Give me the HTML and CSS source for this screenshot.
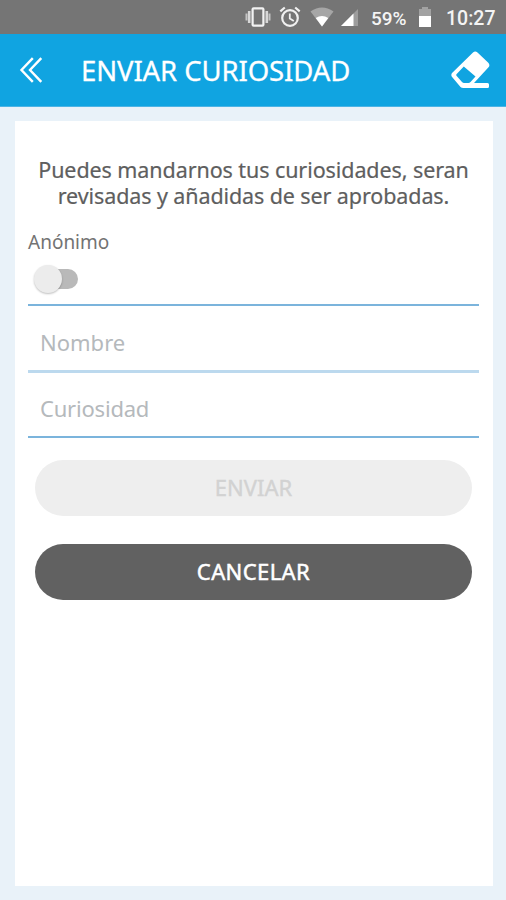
FILE: index.html
```
<!DOCTYPE html>
<html lang="es">
<head>
    <meta charset="UTF-8">
    <meta name="viewport" content="width=device-width, initial-scale=1.0">
    <title>Enviar curiosidad</title>
    <link rel="stylesheet" href="styles.css">
</head>
<body>
    <div class="status-bar">
        <svg class="vibrate" width="26" height="20" viewBox="0 0 26 20">
            <path d="M1.500 6.500v7M24.500 6.500v7" stroke="#c4c4c4" stroke-width="2"/>
            <path d="M4.200 4v12M21.800 4v12" stroke="#d8d8d8" stroke-width="2.600"/>
            <rect x="7.600" y="1.300" width="10.800" height="17.400" rx="1" fill="none" stroke="#f2f2f2" stroke-width="2.200"/>
        </svg>
        <svg class="alarm" width="22" height="22" viewBox="0 0 22 22" fill="none" stroke="#f0f0f0" stroke-width="2.200">
            <circle cx="11" cy="12" r="7.800"/>
            <path d="M1.300 5.300l4.500-3.800M20.700 5.300l-4.500-3.800"/>
            <path d="M10.800 7.500v5l4 2.500" stroke-width="1.800"/>
        </svg>
        <svg class="wifi" width="24" height="20" viewBox="0 0 24 20">
            <path d="M0.500 4.500Q12-3.500 23.500 4.500L12 19.500z" fill="#a6a6a6"/>
            <path d="M5.700 11Q12 7 18.300 11L12 19.500z" fill="#fff"/>
        </svg>
        <svg class="signal" width="19" height="19" viewBox="0 0 19 19">
            <path d="M18 1v17H1z" fill="#9c9c9c"/>
            <path d="M13.500 5.500V18H1z" fill="#fff"/>
        </svg>
        <span class="percent">59%</span>
        <svg class="battery" width="14" height="21" viewBox="0 0 14 21">
            <path d="M4 0h6v2h3v7H1V2h3z" fill="#a2a2a2"/>
            <path d="M1 9h12v11H1z" fill="#fff"/>
        </svg>
        <span class="clock">10:27</span>
    </div>

    <header class="toolbar">
        <svg class="back" width="24" height="28" viewBox="0 0 24 28" fill="none" stroke="#fff" stroke-width="2.400">
            <path d="M13.800 2.200L2.500 14l11.300 11.800M22.300 2.200L11 14l11.300 11.800"/>
        </svg>
        <h1>ENVIAR CURIOSIDAD</h1>
        <svg class="eraser" width="40" height="40" viewBox="0 0 40 40">
            <path fill="#fff" fill-rule="evenodd" d="M23 2.500q2.200-2 4.500 0l10.800 10.300q2.200 2.400 0 4.700L24 33h13.500q1.500 0 1.500 1.500v2q0 1.500-1.500 1.500H13.500q-2 0-3-1L2.300 27.300q-2-2.300 0-4.500zM13.800 16.500L6.700 24q-1 1 0 2l5.300 6q1 1 2 1h4.500q1 0 2-1l5-5.500z"/>
        </svg>
    </header>

    <main class="card">
        <div class="intro">
            <p class="line-one">Puedes mandarnos tus curiosidades, seran</p>
            <p class="line-two">revisadas y añadidas de ser aprobadas.</p>
        </div>

        <div class="anonymous">
            <span class="label">Anónimo</span>
            <div class="switch"><div class="thumb"></div></div>
        </div>

        <div class="field name"><span>Nombre</span></div>
        <div class="field fact"><span>Curiosidad</span></div>

        <button class="btn send" disabled>ENVIAR</button>
        <button class="btn cancel">CANCELAR</button>
    </main>
</body>
</html>
```
FILE: styles.css
```
* {
    box-sizing: border-box;
}

body {
    margin: 0;
    height: 900px;
    display: flex;
    flex-direction: column;
    overflow: hidden;
    background-color: #e9f2f9;
    font-family: "Noto Sans", "Open Sans", sans-serif;
    color: #5e5e5e;
}

.status-bar {
    height: 34px;
    flex: none;
    display: flex;
    align-items: center;
    padding-left: 245px;
    background-color: #757575;
    color: #f4f4f4;
    font-family: Roboto, sans-serif;
    font-weight: 500;
    white-space: nowrap;
}

.status-bar svg {
    flex: none;
}

.alarm {
    margin-left: 8px;
}

.wifi {
    margin-left: 9px;
}

.signal {
    margin-left: 6px;
}

.percent {
    width: 37px;
    margin: 2px 0 0 12px;
    font-size: 19px;
}

.battery {
    margin-left: 10px;
}

.clock {
    margin: 2px 0 0 14px;
    font-size: 19.5px;
}

.toolbar {
    height: 73px;
    flex: none;
    display: flex;
    align-items: center;
    padding: 0 16px 0 19px;
    background-color: #10a4e1;
    border-bottom: 1px solid #4cb4e5;
    color: #fff;
}

.toolbar h1 {
    margin: 2px 0 0 38px;
    font-size: 27.5px;
    font-weight: 400;
    line-height: 40px;
    letter-spacing: -0.1px;
    white-space: nowrap;
    -webkit-text-stroke: 0.3px;
}

.eraser {
    margin-left: auto;
}

.card {
    flex: 1;
    display: flex;
    flex-direction: column;
    margin: 14px 13px 14px 15px;
    padding: 36px 14px 0 13px;
    background-color: #fff;
}

.intro {
    height: 52px;
    text-align: center;
    font-size: 21.5px;
    line-height: 25.5px;
    white-space: nowrap;
    -webkit-text-stroke: 0.2px;
}

.intro p {
    margin: 0;
}

.line-one {
    letter-spacing: -0.08px;
}

.line-two {
    letter-spacing: -0.1px;
}

.anonymous {
    height: 97px;
    padding-top: 19px;
    border-bottom: 2px solid #7bb4dc;
}

.label {
    display: block;
    font-size: 19px;
    line-height: 28px;
    color: #737373;
}

.switch {
    width: 42px;
    height: 20px;
    margin: 13px 0 0 8px;
    display: flex;
    align-items: center;
    background-color: #b9b9b9;
    border-radius: 10px;
}

.thumb {
    width: 28px;
    height: 28px;
    flex: none;
    margin-left: -2px;
    background-color: #ececec;
    border-radius: 50%;
    box-shadow: 0 1px 2px rgba(0, 0, 0, 0.25);
}

.field {
    height: 65px;
    padding: 18px 0 0 12px;
    font-size: 22px;
    line-height: 34px;
    color: #b5b9bc;
    border-bottom: 2px solid #7bb4dc;
}

.name {
    height: 67px;
    padding-top: 19px;
    border-bottom: 3px solid #bcd9ee;
}

.fact {
    letter-spacing: -0.2px;
}

.btn {
    height: 56px;
    flex: none;
    margin: 0 7px 28px;
    padding: 0 0 2px;
    border: none;
    border-radius: 28px;
    font-family: inherit;
    font-size: 22px;
}

.send {
    margin-top: 22px;
    background-color: #eee;
    color: #d2d2d2;
    -webkit-text-stroke: 0.4px;
}

.cancel {
    background-color: #616161;
    color: #fff;
    letter-spacing: 0.4px;
    -webkit-text-stroke: 0.5px;
}
```
